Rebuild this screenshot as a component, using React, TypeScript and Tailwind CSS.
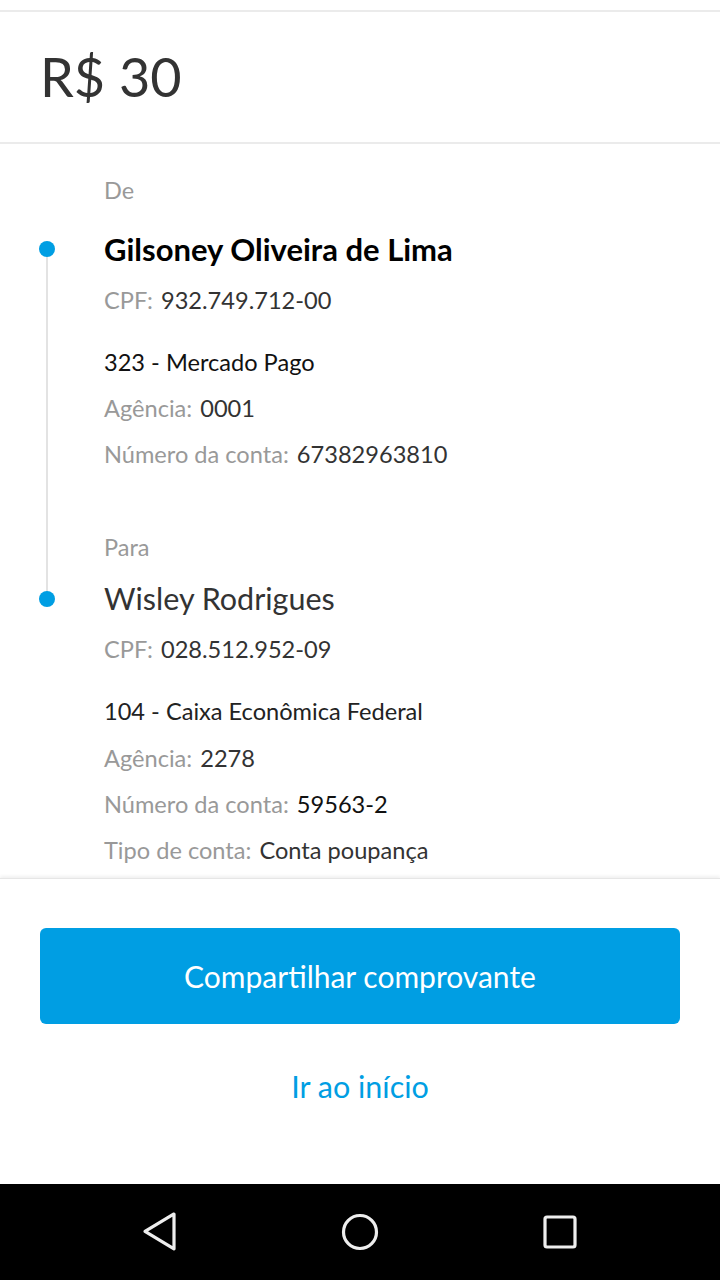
import React from "react";

const F = { fontFamily: "Lato, 'Open Sans', sans-serif" };

function Row({ mt, label, value, valueCls = "text-[#333]" }: { mt: string; label?: string; value: string; valueCls?: string }) {
  return (
    <div className={`${mt} h-[40px] flex items-center text-[23.6px]`}>
      {label && <span className="text-[#999] mr-[8px]">{label}</span>}
      <span className={valueCls}>{value}</span>
    </div>
  );
}

export default function App() {
  return (
    <div className="w-[720px] h-[1280px] flex flex-col bg-white overflow-hidden" style={F}>
      <div className="h-[10px] shrink-0" />
      <div className="h-[2px] bg-[#ebebeb] shrink-0" />
      <div className="h-[130px] shrink-0 flex items-center pl-[40px] text-[54px] text-[#333] leading-none">R$ 30</div>
      <div className="h-[2px] bg-[#ebebeb] shrink-0" />
      <div className="relative flex-1 pl-[104px] pt-[27px]">
        <div className="absolute left-[46px] top-[105px] w-[2px] h-[350px] bg-[#e3e3e3]" />
        <div className="absolute left-[39px] top-[97px] w-[16px] h-[16px] rounded-full bg-[#009ee3]" />
        <div className="absolute left-[39px] top-[447px] w-[16px] h-[16px] rounded-full bg-[#009ee3]" />
        <div className="h-[40px] flex items-center text-[23.5px] text-[#999]">De</div>
        <div className="mt-[18px] h-[40px] flex items-center text-[31px] font-bold text-black">Gilsoney Oliveira de Lima</div>
        <Row mt="mt-[12px]" label="CPF:" value="932.749.712-00" />
        <Row mt="mt-[22px]" value="323 - Mercado Pago" valueCls="text-[#111]" />
        <Row mt="mt-[6px]" label="Agência:" value="0001" />
        <Row mt="mt-[6px]" label="Número da conta:" value="67382963810" />
        <div className="mt-[53px] h-[40px] flex items-center text-[23.5px] text-[#999]">Para</div>
        <div className="mt-[11px] h-[40px] flex items-center text-[30.5px] text-[#333]">Wisley Rodrigues</div>
        <Row mt="mt-[11px]" label="CPF:" value="028.512.952-09" />
        <Row mt="mt-[22px]" value="104 - Caixa Econômica Federal" valueCls="text-[#222]" />
        <Row mt="mt-[7px]" label="Agência:" value="2278" />
        <Row mt="mt-[6px]" label="Número da conta:" value="59563-2" valueCls="text-[#111]" />
        <Row mt="mt-[6px]" label="Tipo de conta:" value="Conta poupança" />
      </div>
      <div className="h-[306px] shrink-0 flex flex-col border-t border-[#e6e6e6] shadow-[0_-2px_3px_rgba(0,0,0,0.06)]">
        <div className="mt-[49px] mx-[40px] h-[96px] rounded-[6px] bg-[#009ee3] flex items-center justify-center text-white text-[30px]">
          Compartilhar comprovante
        </div>
        <div className="mt-[36px] h-[54px] flex items-center justify-center text-[#009ee3] text-[30.5px]">Ir ao início</div>
      </div>
      <div className="h-[96px] shrink-0 bg-black flex items-center justify-center">
        <div className="w-[440px] flex justify-between items-center">
          <svg width="40" height="40" viewBox="0 0 40 40">
            <path d="M35 2 L6 20 L35 38 Z" transform="translate(-1 0) scale(1 0.97)" fill="none" stroke="#eee" strokeWidth="3.2" strokeLinejoin="round" />
          </svg>
          <svg width="40" height="40" viewBox="0 0 40 40">
            <circle cx="20" cy="20" r="16.5" fill="none" stroke="#eee" strokeWidth="3.2" />
          </svg>
          <svg width="40" height="40" viewBox="0 0 40 40">
            <rect x="5" y="5" width="30" height="30" rx="2" fill="none" stroke="#eee" strokeWidth="3.2" />
          </svg>
        </div>
      </div>
    </div>
  );
}
